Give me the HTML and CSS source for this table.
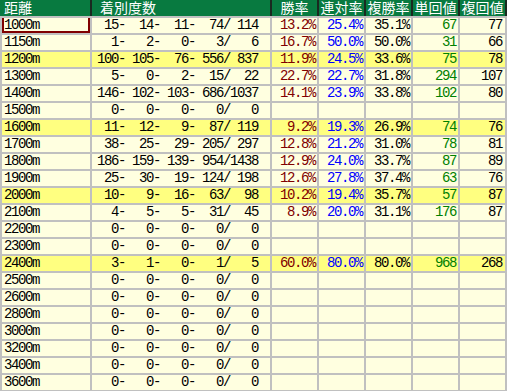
FILE: index.html
```html
<!DOCTYPE html>
<html lang="ja">
<head>
<meta charset="utf-8">
<title>距離別成績</title>
<link rel="stylesheet" href="styles.css">
</head>
<body>
<table class="stats">
<thead>
<tr><th class="dist">距離</th><th class="counts">着別度数</th><th class="pct">勝率</th><th class="pct">連対率</th><th class="pct">複勝率</th><th class="pct">単回値</th><th class="pct last">複回値</th></tr>
</thead>
<tbody>
<tr><td class="dist focus">1000m</td><td class="counts"> 15-  14-  11-  74/ 114</td><td class="num win">13.2%</td><td class="num place">25.4%</td><td class="num">35.1%</td><td class="num ret">67</td><td class="num ret2">77</td></tr>
<tr><td class="dist">1150m</td><td class="counts">  1-   2-   0-   3/   6</td><td class="num win">16.7%</td><td class="num place">50.0%</td><td class="num">50.0%</td><td class="num ret">31</td><td class="num ret2">66</td></tr>
<tr class="hl"><td class="dist">1200m</td><td class="counts">100- 105-  76- 556/ 837</td><td class="num win">11.9%</td><td class="num place">24.5%</td><td class="num">33.6%</td><td class="num ret">75</td><td class="num ret2">78</td></tr>
<tr><td class="dist">1300m</td><td class="counts">  5-   0-   2-  15/  22</td><td class="num win">22.7%</td><td class="num place">22.7%</td><td class="num">31.8%</td><td class="num ret">294</td><td class="num ret2">107</td></tr>
<tr><td class="dist">1400m</td><td class="counts">146- 102- 103- 686/1037</td><td class="num win">14.1%</td><td class="num place">23.9%</td><td class="num">33.8%</td><td class="num ret">102</td><td class="num ret2">80</td></tr>
<tr><td class="dist">1500m</td><td class="counts">  0-   0-   0-   0/   0</td><td></td><td></td><td></td><td></td><td></td></tr>
<tr class="hl"><td class="dist">1600m</td><td class="counts"> 11-  12-   9-  87/ 119</td><td class="num win">9.2%</td><td class="num place">19.3%</td><td class="num">26.9%</td><td class="num ret">74</td><td class="num ret2">76</td></tr>
<tr><td class="dist">1700m</td><td class="counts"> 38-  25-  29- 205/ 297</td><td class="num win">12.8%</td><td class="num place">21.2%</td><td class="num">31.0%</td><td class="num ret">78</td><td class="num ret2">81</td></tr>
<tr><td class="dist">1800m</td><td class="counts">186- 159- 139- 954/1438</td><td class="num win">12.9%</td><td class="num place">24.0%</td><td class="num">33.7%</td><td class="num ret">87</td><td class="num ret2">89</td></tr>
<tr><td class="dist">1900m</td><td class="counts"> 25-  30-  19- 124/ 198</td><td class="num win">12.6%</td><td class="num place">27.8%</td><td class="num">37.4%</td><td class="num ret">63</td><td class="num ret2">76</td></tr>
<tr class="hl"><td class="dist">2000m</td><td class="counts"> 10-   9-  16-  63/  98</td><td class="num win">10.2%</td><td class="num place">19.4%</td><td class="num">35.7%</td><td class="num ret">57</td><td class="num ret2">87</td></tr>
<tr><td class="dist">2100m</td><td class="counts">  4-   5-   5-  31/  45</td><td class="num win">8.9%</td><td class="num place">20.0%</td><td class="num">31.1%</td><td class="num ret">176</td><td class="num ret2">87</td></tr>
<tr><td class="dist">2200m</td><td class="counts">  0-   0-   0-   0/   0</td><td></td><td></td><td></td><td></td><td></td></tr>
<tr><td class="dist">2300m</td><td class="counts">  0-   0-   0-   0/   0</td><td></td><td></td><td></td><td></td><td></td></tr>
<tr class="hl"><td class="dist">2400m</td><td class="counts">  3-   1-   0-   1/   5</td><td class="num win">60.0%</td><td class="num place">80.0%</td><td class="num">80.0%</td><td class="num ret">968</td><td class="num ret2">268</td></tr>
<tr><td class="dist">2500m</td><td class="counts">  0-   0-   0-   0/   0</td><td></td><td></td><td></td><td></td><td></td></tr>
<tr><td class="dist">2600m</td><td class="counts">  0-   0-   0-   0/   0</td><td></td><td></td><td></td><td></td><td></td></tr>
<tr><td class="dist">2800m</td><td class="counts">  0-   0-   0-   0/   0</td><td></td><td></td><td></td><td></td><td></td></tr>
<tr><td class="dist">3000m</td><td class="counts">  0-   0-   0-   0/   0</td><td></td><td></td><td></td><td></td><td></td></tr>
<tr><td class="dist">3200m</td><td class="counts">  0-   0-   0-   0/   0</td><td></td><td></td><td></td><td></td><td></td></tr>
<tr><td class="dist">3400m</td><td class="counts">  0-   0-   0-   0/   0</td><td></td><td></td><td></td><td></td><td></td></tr>
<tr><td class="dist">3600m</td><td class="counts">  0-   0-   0-   0/   0</td><td></td><td></td><td></td><td></td><td></td></tr>
</tbody>
</table>
</body>
</html>
```
FILE: styles.css
```css
html, body {
  margin: 0;
  padding: 0;
  background: #ffffff;
  overflow: hidden;
}

.stats {
  table-layout: fixed;
  width: 507px;
  border-collapse: separate;
  border-spacing: 2px;
  background: #c0c0c0;
  margin-top: -2px;
  font-family: "Liberation Mono", "DejaVu Sans Mono", monospace;
  font-size: 14px;
  letter-spacing: -1.4px;
  color: #000000;
}

.stats th,
.stats td {
  padding: 0;
  white-space: pre;
}

.stats td {
  overflow: hidden;
}

.stats th {
  height: 16px;
  line-height: 14px;
  vertical-align: top;
  background: #087a40;
  color: #ffffff;
  font-family: "Noto Sans CJK JP", "Noto Sans CJK SC", sans-serif;
  font-weight: normal;
  font-size: 14px;
  letter-spacing: 0;
  text-align: center;
  box-shadow: 2px 0 0 #1a2a20;
}

.stats th.dist {
  width: 88px;
  text-align: left;
  text-indent: 2px;
  box-shadow: 2px 0 0 #1a2a20, -2px 0 0 #087a40;
}

.stats th.counts {
  width: 178px;
  text-align: left;
  text-indent: 8px;
}

.stats th.pct {
  width: 45px;
}

.stats td {
  height: 15px;
  line-height: 15px;
  background: #ffffe0;
}

.stats tr.hl td {
  background: #ffff80;
}

.stats td.dist {
  padding-left: 2px;
}

.stats td.focus {
  position: relative;
}

.stats td.focus::after {
  content: "";
  position: absolute;
  left: 0;
  right: 0;
  top: -2px;
  bottom: 0;
  border: 2px solid #800000;
}

.stats td.counts {
  padding-left: 5px;
}

.stats td.num {
  text-align: right;
  padding-right: 2px;
}

.stats td.ret2 {
  padding-right: 3px;
}

.win {
  color: #800000;
}

.place {
  color: #0000ff;
}

.ret {
  color: #008000;
}
```
